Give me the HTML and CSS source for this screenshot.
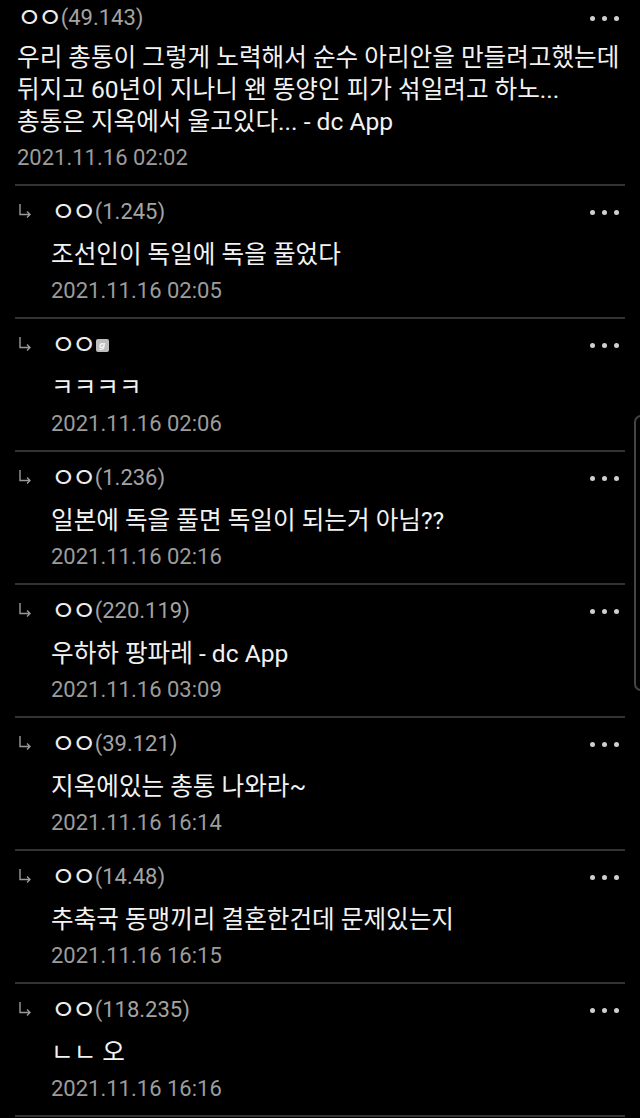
FILE: index.html
```html
<!DOCTYPE html>
<html lang="ko">

<head>
  <meta charset="UTF-8">
  <meta name="viewport" content="width=device-width, initial-scale=1.0">
  <title>댓글</title>

  <link rel="stylesheet" href="styles.css">
</head>

<body>
  <div class="list">
    <div class="cmt first">
      <div class="head">
        <span class="name"><b>ㅇㅇ</b><span class="ip">(49.143)</span></span>
        <span class="more"><i></i><i></i><i></i></span>
      </div>
      <p class="txt">우리 총통이 그렇게 노력해서 순수 아리안을 만들려고했는데<br>뒤지고 60년이 지나니 왠 똥양인 피가 섞일려고 하노...<br>총통은 지옥에서 울고있다... - dc App</p>
      <p class="date">2021.11.16 02:02</p>
    </div>

    <div class="cmt reply">
      <div class="head">
        <span class="arrow"><svg width="14" height="16" viewBox="0 0 14 16"><path d="M2 1v10.5h10M9 8.5l3 3-3 3" fill="none" stroke="#9a9a9a" stroke-width="1.4"/></svg></span>
        <span class="name"><b>ㅇㅇ</b><span class="ip">(1.245)</span></span>
        <span class="more"><i></i><i></i><i></i></span>
      </div>
      <p class="txt">조선인이 독일에 독을 풀었다</p>
      <p class="date">2021.11.16 02:05</p>
    </div>

    <div class="cmt reply">
      <div class="head">
        <span class="arrow"><svg width="14" height="16" viewBox="0 0 14 16"><path d="M2 1v10.5h10M9 8.5l3 3-3 3" fill="none" stroke="#9a9a9a" stroke-width="1.4"/></svg></span>
        <span class="name"><b>ㅇㅇ</b><span class="gon">g</span></span>
        <span class="more"><i></i><i></i><i></i></span>
      </div>
      <p class="txt">ㅋㅋㅋㅋ</p>
      <p class="date">2021.11.16 02:06</p>
    </div>

    <div class="cmt reply">
      <div class="head">
        <span class="arrow"><svg width="14" height="16" viewBox="0 0 14 16"><path d="M2 1v10.5h10M9 8.5l3 3-3 3" fill="none" stroke="#9a9a9a" stroke-width="1.4"/></svg></span>
        <span class="name"><b>ㅇㅇ</b><span class="ip">(1.236)</span></span>
        <span class="more"><i></i><i></i><i></i></span>
      </div>
      <p class="txt">일본에 독을 풀면 독일이 되는거 아님??</p>
      <p class="date">2021.11.16 02:16</p>
    </div>

    <div class="cmt reply">
      <div class="head">
        <span class="arrow"><svg width="14" height="16" viewBox="0 0 14 16"><path d="M2 1v10.5h10M9 8.5l3 3-3 3" fill="none" stroke="#9a9a9a" stroke-width="1.4"/></svg></span>
        <span class="name"><b>ㅇㅇ</b><span class="ip">(220.119)</span></span>
        <span class="more"><i></i><i></i><i></i></span>
      </div>
      <p class="txt">우하하 팡파레 - dc App</p>
      <p class="date">2021.11.16 03:09</p>
    </div>

    <div class="cmt reply">
      <div class="head">
        <span class="arrow"><svg width="14" height="16" viewBox="0 0 14 16"><path d="M2 1v10.5h10M9 8.5l3 3-3 3" fill="none" stroke="#9a9a9a" stroke-width="1.4"/></svg></span>
        <span class="name"><b>ㅇㅇ</b><span class="ip">(39.121)</span></span>
        <span class="more"><i></i><i></i><i></i></span>
      </div>
      <p class="txt">지옥에있는 총통 나와라~</p>
      <p class="date">2021.11.16 16:14</p>
    </div>

    <div class="cmt reply">
      <div class="head">
        <span class="arrow"><svg width="14" height="16" viewBox="0 0 14 16"><path d="M2 1v10.5h10M9 8.5l3 3-3 3" fill="none" stroke="#9a9a9a" stroke-width="1.4"/></svg></span>
        <span class="name"><b>ㅇㅇ</b><span class="ip">(14.48)</span></span>
        <span class="more"><i></i><i></i><i></i></span>
      </div>
      <p class="txt">추축국 동맹끼리 결혼한건데 문제있는지</p>
      <p class="date">2021.11.16 16:15</p>
    </div>

    <div class="cmt reply">
      <div class="head">
        <span class="arrow"><svg width="14" height="16" viewBox="0 0 14 16"><path d="M2 1v10.5h10M9 8.5l3 3-3 3" fill="none" stroke="#9a9a9a" stroke-width="1.4"/></svg></span>
        <span class="name"><b>ㅇㅇ</b><span class="ip">(118.235)</span></span>
        <span class="more"><i></i><i></i><i></i></span>
      </div>
      <p class="txt">ㄴㄴ 오</p>
      <p class="date">2021.11.16 16:16</p>
    </div>
  </div>

  <div class="scroll-bar"></div>
</body>

</html>
```

FILE: styles.css
```css
* {
  margin: 0;
  padding: 0;
  box-sizing: border-box;
}

body {
  width: 640px;
  height: 1118px;
  background: #000;
  overflow: hidden;
  font-family: Roboto, "Noto Sans CJK KR", sans-serif;
  color: #f0f0f0;
  position: relative;
}

.list {
  padding: 0 15px;
}

.cmt {
  padding: 11px 6px 11px 2px;
  border-bottom: 2px solid #333;
}

.cmt.first {
  padding-top: 3px;
}

.head {
  display: flex;
  align-items: center;
  height: 30px;
}

.arrow {
  width: 34px;
  display: flex;
  align-items: center;
  padding-left: 1px;
  padding-bottom: 2px;
}

.name {
  flex: 1;
  display: flex;
  align-items: center;
  font-size: 22px;
  line-height: 30px;
  color: #e6e6e6;
}

.name b {
  font-weight: normal;
  font-size: 27px;
  letter-spacing: -4px;
  margin-right: 2px;
  color: #ededed;
}

.name .ip {
  color: #a4a4a4;
}

.gon {
  width: 13px;
  height: 13px;
  margin-left: 1px;
  border-radius: 2px;
  background: #bdbdbd;
  color: #f4f4f4;
  font-family: "DejaVu Sans", sans-serif;
  font-size: 9px;
  font-style: italic;
  font-weight: bold;
  line-height: 13px;
  text-align: center;
}

.more {
  display: flex;
  gap: 7px;
}

.more i {
  width: 5px;
  height: 5px;
  border-radius: 50%;
  background: #cfcfcf;
}

.txt {
  margin-top: 12px;
  font-size: 24.6px;
  line-height: 32px;
  white-space: nowrap;
  color: #f2f2f2;
}

.cmt.first .txt {
  margin-top: 9px;
}

.date {
  margin-top: 5px;
  font-size: 22px;
  line-height: 30px;
  color: #9c9c9c;
}

.reply .txt,
.reply .date {
  padding-left: 34px;
}

.scroll-bar {
  position: absolute;
  top: 415px;
  left: 634px;
  width: 14px;
  height: 276px;
  border: 2px solid #444;
  border-radius: 8px;
}
```
